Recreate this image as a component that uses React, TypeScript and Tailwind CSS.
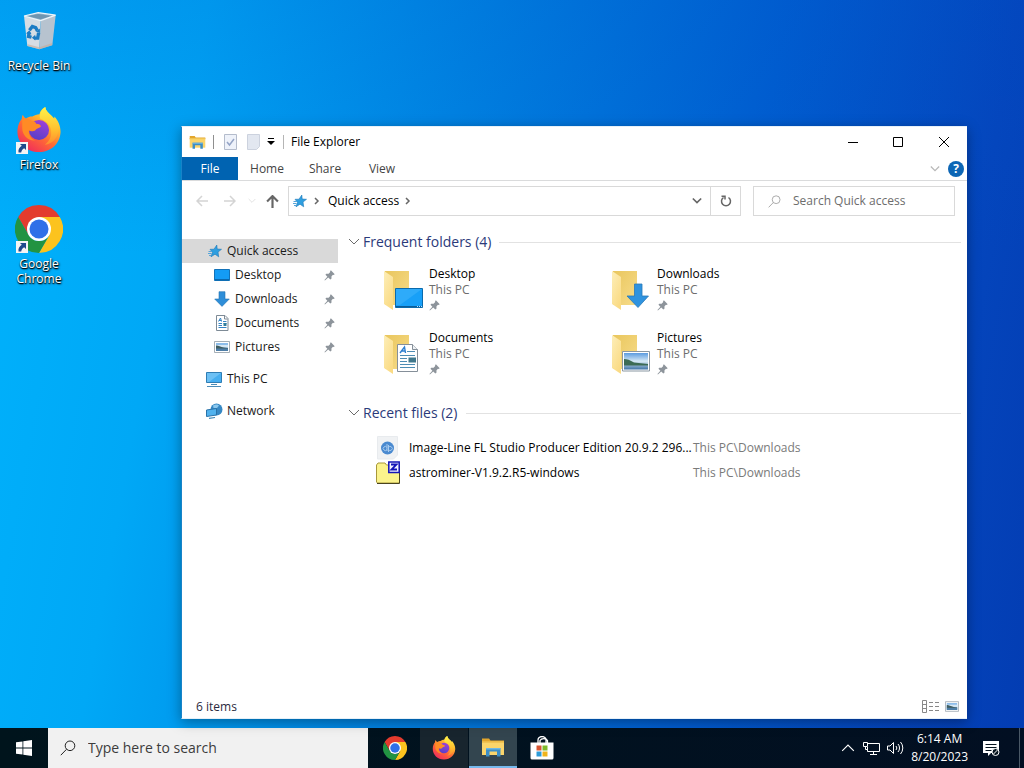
import type { ReactNode } from 'react';
import { clsx } from 'clsx';

type IconProps = { className?: string };

/* ---------- app icons ---------- */

function ChromeIcon({ className }: IconProps) {
  return (
    <svg viewBox="0 0 48 48" className={className} aria-hidden="true">
      <path fill="#e33b2e" d="M24 0A24 24 0 0 1 44.8 12H24L13.6 30 3.2 12A24 24 0 0 1 24 0Z" />
      <path fill="#fcc31e" d="M44.8 12A24 24 0 0 1 24 48L34.4 30 24 12Z" />
      <path fill="#229342" d="M3.2 12 13.6 30A12 12 0 0 0 34.4 30L24 48A24 24 0 0 1 3.2 12Z" />
      <circle cx="24" cy="24" r="12" fill="#fff" />
      <circle cx="24" cy="24" r="9.5" fill="#2f70e8" />
    </svg>
  );
}

function FirefoxIcon({ className }: IconProps) {
  return (
    <svg viewBox="0 0 48 48" className={className} aria-hidden="true">
      <defs>
        <linearGradient id="ffBody" x1="0.8" y1="0.05" x2="0.2" y2="0.95">
          <stop offset="0" stopColor="#fff044" />
          <stop offset="0.3" stopColor="#ffb52c" />
          <stop offset="0.6" stopColor="#ff6a35" />
          <stop offset="1" stopColor="#f02c5c" />
        </linearGradient>
        <linearGradient id="ffGlobe" x1="0.7" y1="0" x2="0.3" y2="1">
          <stop offset="0" stopColor="#a03fd8" />
          <stop offset="1" stopColor="#5540c8" />
        </linearGradient>
        <linearGradient id="ffTail" x1="0.5" y1="0" x2="0.5" y2="1">
          <stop offset="0" stopColor="#fff34a" />
          <stop offset="0.6" stopColor="#ffc02e" />
          <stop offset="1" stopColor="#ff8a30" />
        </linearGradient>
      </defs>
      <path
        fill="url(#ffBody)"
        d="M24 47C11 47 1.500 37.500 1.500 25.500 1.500 20 3.500 15 6 12.500 6 11 6.200 9.500 7 8 8 10 9 11.200 10.500 12 13 10.500 15 9.800 17 10 19 8.500 22 7.500 24.500 7.500 25 4.500 27 2 30.500 0 31 4 34 6.500 37 9 38.500 10.500 39 11.500 39.500 13 40 11.800 40.200 11 40 10 44 14 46.500 20 46.500 26 46 38 36.500 47 24 47Z"
      />
      <circle cx="24" cy="24" r="10.5" fill="url(#ffGlobe)" />
      <path
        fill="#ff8b25"
        d="M6.500 12.500C11 12 14.500 12.500 16.500 14.500 19 14.500 20.500 15.500 21 17.500 24 17.800 26 18.500 26 20.500 23.500 22 21 22.300 20 24.500 18 26 14.500 25 13.500 24.500 13 28 15 33 20 35 12 35.500 6.500 29 6.500 22Z"
      />
      <path
        fill="url(#ffTail)"
        d="M30.500 0C31 4 34 6.500 37 9 43 14 46 21 43.500 28 41 36 35 39 30 39.500 36 35 38 29 36 22 34.500 17 30 14 25.500 12.500 23.500 9 26 3 30.500 0Z"
      />
    </svg>
  );
}

function RecycleBinIcon({ className }: IconProps) {
  return (
    <svg viewBox="0 0 48 48" className={className} aria-hidden="true">
      <path fill="#8fb4cc" d="M6 6 23 2l21 3-18 7Z" />
      <path fill="#6f95b0" d="m10 6 13-2.500L39 6l-13 4Z" />
      <path fill="#d6dde4" d="M6 6l20 5.500L24.500 46 10 42Z" />
      <path fill="#b7c3cf" d="M26 11.500 44 5l-4 36-15.500 5Z" />
      <path stroke="#edf5fa" strokeWidth="1.500" fill="none" d="M6 6l20 5.500L44 5M6 6l17-4 21 3" />
      <path fill="#c5aa98" d="M10.500 40l14 3.500L40 38.500 39.700 41 24.500 46 10 42Z" opacity="0.6" />
      <g fill="none" stroke="#1c7cc4" strokeWidth="4">
        <path d="m12.500 23 3.500-4.500 4 1.500 2 3.500" />
        <path d="m23.500 26-1 6.500h-4" />
        <path d="m15 31.500-3.500-1 .5-5" />
      </g>
      <path fill="#1c7cc4" d="m25 21 .2 5.500-5-1.500ZM19.500 28.500v7l-4-3.500ZM8.500 27l4-4 2.500 5Z" />
    </svg>
  );
}

function ShortcutArrow({ className }: IconProps) {
  return (
    <svg viewBox="0 0 12 12" className={className} aria-hidden="true">
      <path fill="#f4f4f4" d="M0 0h12v12H0z" />
      <path fill="#1f4a8c" d="M4 2h6v6L8.200 6.200C6.500 7.200 5.500 8.500 5.200 10.500H2.500C2 7.500 3.500 5.200 5.800 3.800Z" />
    </svg>
  );
}

function ExplorerIcon({ className }: IconProps) {
  return (
    <svg viewBox="0 0 24 20" className={className} aria-hidden="true">
      <path fill="#e3a62c" d="M1 1.500h7l1.500 2H23V6H1z" />
      <path fill="#fbd56b" d="M1 4.500h22V18H1z" />
      <path fill="#e8b33e" d="M1 4.500h22V6H1z" opacity="0.5" />
      <path fill="#3c8ec6" d="M5 11h14.500v8.500H16v-5H8.500v5H5z" />
      <path fill="#6fb8e4" d="M5 11h14.500v1.500H5z" />
    </svg>
  );
}

function StoreIcon({ className }: IconProps) {
  return (
    <svg viewBox="0 0 24 24" className={className} aria-hidden="true">
      <path fill="none" stroke="#fff" strokeWidth="1.300" d="M8 7V4a4 3.500 0 0 1 8 0v3M10 7V4.500a4 3 0 0 1 7.500 0V7" />
      <path fill="#fff" d="M.5 6.500h23V22a1.500 1.500 0 0 1-1.500 1.500H2A1.500 1.500 0 0 1 .5 22z" />
      <path fill="#d65532" d="M6.500 9.500h5v5h-5z" />
      <path fill="#7fba2c" d="M12.500 9.500h5v5h-5z" />
      <path fill="#2c9bd8" d="M6.500 15.500h5v5h-5z" />
      <path fill="#f0b41c" d="M12.500 15.500h5v5h-5z" />
    </svg>
  );
}

function WindowsLogo({ className }: IconProps) {
  return (
    <svg viewBox="0 0 16 16" className={className} fill="#fff" aria-hidden="true">
      <path d="M0 2.300 6.500 1.400V7.600H0zM7.300 1.300 16 0V7.600H7.300zM0 8.400H6.500V14.600L0 13.700zM7.300 8.400H16V16L7.300 14.700z" />
    </svg>
  );
}

/* ---------- small glyphs ---------- */

function StarIcon({ className }: IconProps) {
  return (
    <svg viewBox="0 0 16 16" className={className} aria-hidden="true">
      <path
        fill="#2f9fe0"
        stroke="#1d78b8"
        strokeWidth="0.600"
        d="m9.800 2 .4 4 4.300.3-3.500 2.700.7 4.800-3.700-2.600L4 13.800l1.500-4.500L3 6.300l4-.1Z"
      />
      <path stroke="#56a5da" d="M1.500 8.500H5M1 10.500h3.500M2 12.500h2" />
    </svg>
  );
}

function PinIcon({ className }: IconProps) {
  return (
    <svg viewBox="0 0 12 12" className={className} aria-hidden="true">
      <path
        fill="#8d949b"
        d="M7.500.3 11.700 4.500 10.500 5.400 9.800 5.100 8.200 6.900 8.100 9.600 6.900 10.400 4.600 8.100 1 11.400.5 11 3.700 7.300 1.600 5.200 2.400 4 5 4 6.800 2.300 6.600 1.400Z"
      />
    </svg>
  );
}

function DesktopIcon({ className }: IconProps) {
  return (
    <svg viewBox="0 0 16 16" className={className} aria-hidden="true">
      <path fill="#149cf5" stroke="#1272b8" d="M.5 2.500h15v11H.5z" />
      <path fill="#0b6ab0" d="M1 12h14v1.500H1z" />
    </svg>
  );
}

function DownArrowIcon({ className }: IconProps) {
  return (
    <svg viewBox="0 0 16 16" className={className} aria-hidden="true">
      <path fill="#2e8ed8" stroke="#2474b4" strokeWidth="0.600" d="M5 .7h6V8h4.300L8 15.400.7 8H5z" />
    </svg>
  );
}

function DocumentIcon({ className }: IconProps) {
  return (
    <svg viewBox="0 0 16 16" className={className} aria-hidden="true">
      <path fill="#fff" stroke="#7e8b96" d="M2.500.5h8.500l3 3v12H2.500z" />
      <path fill="none" stroke="#7e8b96" d="M10.500.8v3.200h3.200" />
      <path fill="none" stroke="#3584c4" d="m4.500 6.500 2-3.500 1 3.500M5 5.500h2.500M9 6.500h3.500M4.500 8.500h3.500M9.500 8.500H12.500M4.500 10.500h3.500M4.500 12.500h8" />
      <path fill="#2e7d9a" d="M9.500 8h3v3h-3z" />
    </svg>
  );
}

function PictureIcon({ className }: IconProps) {
  return (
    <svg viewBox="0 0 16 12" className={className} aria-hidden="true">
      <path fill="#fff" stroke="#8e9aa4" strokeWidth="0.800" d="M.5.5h15v11H.5z" />
      <path fill="#8dbdea" d="M2 2h12v8H2z" />
      <path fill="#d5e7f4" d="M2 4h12v2.500H2z" />
      <path fill="#3f5d60" d="M2 4.500C4 4 6 6 10 6.500l4 .5v1H2z" />
      <path fill="#4d7da6" d="M2 7.500h12V10H2z" />
    </svg>
  );
}

function ThisPcIcon({ className }: IconProps) {
  return (
    <svg viewBox="0 0 18 16" className={className} aria-hidden="true">
      <path fill="#46aef0" stroke="#2f7db4" d="M1.500 1.500h15v10h-15z" />
      <path fill="#86cbf6" d="M2 2h14L4 11H2z" opacity="0.6" />
      <path stroke="#4b8cb8" d="M6 13.500h6M2 15.500h14" />
    </svg>
  );
}

function NetworkIcon({ className }: IconProps) {
  return (
    <svg viewBox="0 0 18 16" className={className} aria-hidden="true">
      <circle cx="11.500" cy="6.500" r="6" fill="#3688c4" />
      <path fill="#8cc8ee" d="M8 2.500c2-1.500 5-1.500 6 0L12 5 8.500 5Z" />
      <path fill="#51b2ee" stroke="#2a72a8" d="m1.500 7 10-1.500V12l-10 1.500z" />
      <path stroke="#3f86b6" strokeWidth="1.200" d="m4 15.300 6-.8" />
    </svg>
  );
}

function FolderIcon({ kind }: { kind: string }) {
  return (
    <svg viewBox="0 0 42 42" className="size-[42px] flex-none" aria-hidden="true">
      <defs>
        <linearGradient id="folderBack" x1="0" y1="0" x2="1" y2="1">
          <stop offset="0" stopColor="#e9c65d" />
          <stop offset="1" stopColor="#f7dc8a" />
        </linearGradient>
        <linearGradient id="folderFlap" x1="0" y1="0" x2="0.600" y2="1">
          <stop offset="0" stopColor="#fdeeb8" />
          <stop offset="1" stopColor="#fadb85" />
        </linearGradient>
        <linearGradient id="photoSky" x1="0" y1="0" x2="0" y2="1">
          <stop offset="0" stopColor="#5b9be0" />
          <stop offset="0.500" stopColor="#d6e9f6" />
          <stop offset="1" stopColor="#3f73a6" />
        </linearGradient>
      </defs>
      <path fill="url(#folderBack)" d="M2 1h24v34H2z" />
      <path fill="url(#folderFlap)" d="M1 1 10 7v33L1 34z" />
      {kind === 'Desktop' && (
        <>
          <path fill="#18a0f8" stroke="#0a6aac" d="M12.500 18.500h27v19h-27z" />
          <path fill="#43b5fb" d="M13 19h26L17 35h-4z" opacity="0.500" />
          <path stroke="#0a5c98" d="M13 36.500h26" />
          <path stroke="#b8e0ff" strokeDasharray="1 1" d="M34 36.500h5" />
        </>
      )}
      {kind === 'Downloads' && (
        <path fill="#2f93df" stroke="#2a78b8" strokeWidth="0.800" d="M23.500 14h7.500v12h6.500L27 37.500 16 26h7.500z" />
      )}
      {kind === 'Documents' && (
        <>
          <path fill="#fff" stroke="#858f99" d="M14.500 10.500h15l5 5v22h-20z" />
          <path fill="#eef1f4" stroke="#858f99" d="M29.500 10.500v5h5" />
          <path fill="none" stroke="#2e7fd0" strokeWidth="1.400" d="m17 19 4.500-6 1 6M18.500 17h4" />
          <path stroke="#4e8db4" d="M24 17.500h8M17 21.500h15M17 24.500h7M17 27.500h7M17 30.500h15M17 33.500h15" />
          <path fill="#41788c" d="M25.500 23.500H33v5h-7.500z" />
        </>
      )}
      {kind === 'Pictures' && (
        <>
          <path fill="#fff" stroke="#8a97a2" d="M11.500 17.500h27v19.500h-27z" />
          <path fill="url(#photoSky)" d="M13 19h24v16.500H13z" />
          <path fill="#3c6b55" d="M13 25c3 0 6 1 10 3.500l14 1.500v1.500H13z" />
        </>
      )}
    </svg>
  );
}

function Chevron({ className, d = 'm1 3 5 5 5-5' }: IconProps & { d?: string }) {
  return (
    <svg viewBox="0 0 12 12" className={clsx('fill-none stroke-current', className)} aria-hidden="true">
      <path d={d} />
    </svg>
  );
}

function SearchIcon({ className }: IconProps) {
  return (
    <svg viewBox="0 0 16 16" className={clsx('fill-none stroke-current', className)} aria-hidden="true">
      <circle cx="10" cy="5.800" r="4.800" />
      <path d="M6.500 9.300.8 15.200" />
    </svg>
  );
}

/* ---------- desktop ---------- */

function DesktopShortcut({ label, icon, shortcut }: { label: string; icon: ReactNode; shortcut?: boolean }) {
  return (
    <button className="relative flex h-[99px] w-[78px] flex-col items-center text-xs leading-[15px] text-white text-shadow-[1px_1px_2px_#000,0_1px_1px_#000]">
      <span className="mb-[3px] flex size-12 items-center justify-center">{icon}</span>
      {shortcut && <ShortcutArrow className="absolute top-9 left-4 size-3" />}
      <span className="w-16">{label}</span>
    </button>
  );
}

/* ---------- explorer window ---------- */

function TitleBar() {
  return (
    <header className="flex h-[30px] flex-none items-center">
      <ExplorerIcon className="ml-[7px] h-4 w-[17px]" />
      <span className="ml-[7px] h-3.5 w-px bg-[#8f8f8f]" />
      <button aria-label="Properties" className="ml-[10px]">
        <svg viewBox="0 0 13 16" className="h-4 w-[13px]">
          <path fill="#eef2fa" stroke="#b4bccc" d="M.5.5h12v15H.5z" />
          <path fill="none" stroke="#94a4c6" strokeWidth="1.500" d="m3 8 2.500 3L10 5" />
        </svg>
      </button>
      <button aria-label="New folder" className="ml-[10px]">
        <svg viewBox="0 0 13 16" className="h-4 w-[13px]">
          <path fill="#e2e7f0" stroke="#ccd2de" d="M.5.5h12v12l-3 3h-9z" />
        </svg>
      </button>
      <button aria-label="Customize Quick Access Toolbar" className="ml-[7px]">
        <svg viewBox="0 0 8 8" className="size-2">
          <path d="M1 0h6v1H1zM0 3h8L4 7z" />
        </svg>
      </button>
      <span className="ml-2 h-3.5 w-px bg-[#b5b5b5]" />
      <h1 className="ml-[7px] flex-1 text-black">File Explorer</h1>
      <div className="flex text-black">
        <button aria-label="Minimize" className="flex w-[45px] justify-center">
          <svg viewBox="0 0 10 10" className="size-2.5 stroke-current">
            <path d="M0 5.500h10" />
          </svg>
        </button>
        <button aria-label="Maximize" className="flex w-[45px] justify-center">
          <svg viewBox="0 0 10 10" className="size-2.5 fill-none stroke-current">
            <path d="M.5.5h9v9h-9z" />
          </svg>
        </button>
        <button aria-label="Close" className="flex w-[47px] justify-center">
          <svg viewBox="0 0 10 10" className="size-2.5 stroke-current">
            <path d="m0 0 10 10M10 0 0 10" />
          </svg>
        </button>
      </div>
    </header>
  );
}

function Ribbon() {
  return (
    <div className="flex h-6 flex-none items-stretch border-b border-[#dadbdc] text-[#444]">
      <button className="w-14 bg-[#0063b1] text-white">File</button>
      <button className="w-[58px]">Home</button>
      <button className="w-[58px]">Share</button>
      <button className="w-[56px]">View</button>
      <button aria-label="Expand the Ribbon" className="ml-auto text-[#b8b8b8]">
        <Chevron className="size-[10px] stroke-[1.5]" />
      </button>
      <button
        aria-label="Help"
        className="mr-[3px] ml-2 flex size-4 items-center justify-center self-center rounded-full bg-[#0d66b5] text-xs font-bold text-white"
      >
        ?
      </button>
    </div>
  );
}

function AddressBar() {
  return (
    <div className="flex flex-none items-center pt-[5px] pr-3">
      <div className="flex w-[106px] items-center text-[#d4d4d4]">
        <button aria-label="Back" className="ml-[14px]">
          <Chevron d="M12 6H1M6 1 1 6l5 5" className="size-3 stroke-[1.5]" />
        </button>
        <button aria-label="Forward" className="ml-4">
          <Chevron d="M0 6h11M6 1l5 5-5 5" className="size-3 stroke-[1.5]" />
        </button>
        <button aria-label="Recent locations" className="ml-3">
          <Chevron className="size-2" />
        </button>
        <button aria-label="Up" className="ml-[10px] text-[#666]">
          <Chevron d="M6 12V1M1 6l5-5 5 5" className="size-[13px] stroke-2" />
        </button>
      </div>
      <div className="flex h-[30px] flex-1 items-center border border-[#d9d9d9] text-black">
        <StarIcon className="ml-[3px] size-4" />
        <Chevron d="m4 3 3 3-3 3" className="ml-[3px] size-3 stroke-[1.5] text-[#666]" />
        <button className="ml-[5px]">Quick access</button>
        <Chevron d="m4 3 3 3-3 3" className="ml-[3px] size-3 stroke-[1.5] text-[#666]" />
        <button aria-label="Previous locations" className="mr-2 ml-auto text-[#666]">
          <Chevron className="size-[10px] stroke-2" />
        </button>
        <button aria-label="Refresh" className="flex h-full w-[30px] items-center justify-center border-l border-[#d9d9d9]">
          <svg viewBox="0 0 12 12" className="size-3 fill-none stroke-[#666] stroke-[1.5]">
            <path d="M8.500 2.500A4.500 4.500 0 1 1 3.500 2.500M1.500 1.200H5V4.500" />
          </svg>
        </button>
      </div>
      <label className="ml-3 flex h-[30px] w-[202px] items-center border border-[#d9d9d9] text-[#9a9a9a]">
        <SearchIcon className="ml-[14px] size-[13px]" />
        <input
          type="text"
          aria-label="Search Quick access"
          placeholder="Search Quick access"
          className="ml-3 min-w-0 flex-1 outline-none placeholder:text-[#6d6d6d]"
        />
      </label>
    </div>
  );
}

const PINNED = [
  { name: 'Desktop', Icon: DesktopIcon },
  { name: 'Downloads', Icon: DownArrowIcon },
  { name: 'Documents', Icon: DocumentIcon },
  { name: 'Pictures', Icon: PictureIcon },
];

function NavPane() {
  return (
    <nav className="w-[156px] flex-none pt-px text-[#1a1a1a]">
      <button className="flex h-6 w-full items-center bg-[#d9d9d9] pl-[25px]">
        <StarIcon className="mr-1 size-4" />
        Quick access
      </button>
      {PINNED.map(({ name, Icon }) => (
        <button key={name} className="flex h-6 w-full items-center pl-8">
          <Icon className="mr-[5px] size-4" />
          {name}
          <PinIcon className="mr-[3px] ml-auto size-[11px]" />
        </button>
      ))}
      <button className="mt-2 flex h-6 w-full items-center pl-[23px]">
        <ThisPcIcon className="mr-1 h-4 w-[18px]" />
        This PC
      </button>
      <button className="mt-2 flex h-6 w-full items-center pl-[23px]">
        <NetworkIcon className="mr-1 h-4 w-[18px]" />
        Network
      </button>
    </nav>
  );
}

function GroupHeader({ children }: { children: ReactNode }) {
  return (
    <div className="flex h-5 items-center">
      <Chevron className="size-3 text-[#6b6b6b]" />
      <h2 className="mr-2 ml-[3px] text-sm leading-5 text-[#2b3a7a]">{children}</h2>
      <span className="h-px flex-1 bg-[#e2e2e2]" />
    </div>
  );
}

const RECENT = [
  { name: 'Image-Line FL Studio Producer Edition 20.9.2 296...', path: 'This PC\\Downloads', zip: false },
  { name: 'astrominer-V1.9.2.R5-windows', path: 'This PC\\Downloads', zip: true },
];

function FileIcon({ zip }: { zip: boolean }) {
  return zip ? (
    <svg viewBox="0 0 24 24" className="size-6 flex-none" aria-hidden="true">
      <path fill="#fbf38c" stroke="#a8983a" d="M.5 21V4l1.500-2h7l1.500 2h13v17l-1 1H1.500z" />
      <path stroke="#4a4420" d="M1 22.500h22.500V8" fill="none" />
      <path fill="#f2f2ff" stroke="#1414b8" strokeWidth="1.500" d="M12.800 1h10.400v10.400H12.800z" />
      <path fill="none" stroke="#1414b8" strokeWidth="1.800" d="M15 3.500h5.500L15.500 8.500H21" />
    </svg>
  ) : (
    <svg viewBox="0 0 24 24" className="size-6 flex-none" aria-hidden="true">
      <path fill="#f0f2f4" stroke="#e8ebee" d="M1.500.5h20v18.500l-4 4h-16z" />
      <circle cx="11.500" cy="12" r="6.500" fill="#4a8ad0" />
      <path fill="none" stroke="#a8cbee" d="M11 8v7M12.500 9v7M11 11.500a2 2 0 1 0 0 2M12.500 11.500a2 2 0 1 1 0 2" />
    </svg>
  );
}

function FileList() {
  return (
    <main className="-mt-[6px] min-w-0 flex-1 pr-[6px] pl-[10px] text-black">
      <section className="h-[171px]">
        <GroupHeader>Frequent folders (4)</GroupHeader>
        <div className="mt-[18px] grid grid-cols-[228px_228px] pl-[35px]">
          {PINNED.map(({ name }) => (
            <button key={name} className="flex h-16 items-start gap-1 text-left">
              <FolderIcon kind={name} />
              <span className="flex flex-col leading-4">
                <span className="-mt-1">{name}</span>
                <span className="text-[#6d6d6d]">This PC</span>
                <PinIcon className="mt-0.5 size-[11px]" />
              </span>
            </button>
          ))}
        </div>
      </section>
      <section>
        <GroupHeader>Recent files (2)</GroupHeader>
        <table className="mt-3 ml-7 w-[calc(100%-28px)] table-fixed">
          <tbody>
            {RECENT.map((f) => (
              <tr key={f.name} className="h-[25px]">
                <td className="w-[315px] p-0">
                  <a href="#recent" className="flex items-center gap-[9px]">
                    <FileIcon zip={f.zip} />
                    <span className="whitespace-nowrap">{f.name}</span>
                  </a>
                </td>
                <td className="p-0 pl-0.5 text-[#7a7a7a]">{f.path}</td>
              </tr>
            ))}
          </tbody>
        </table>
      </section>
    </main>
  );
}

function StatusBar() {
  return (
    <footer className="flex h-[23px] flex-none items-center pr-2 pl-[14px] text-[#2a2a40]">
      6 items
      <button aria-label="Details view" className="ml-auto">
        <svg viewBox="0 0 17 13" className="h-[13px] w-[17px] fill-none stroke-[#888]">
          <path d="M.5.5h4v12h-4zM.5 4.500h4M.5 8.500h4" />
          <path strokeDasharray="4 2" d="M7 2.500h10M7 6.500h10M7 10.500h10" />
        </svg>
      </button>
      <button aria-label="Large icons view" className="ml-[6px]">
        <PictureIcon className="h-[11px] w-[14px]" />
      </button>
    </footer>
  );
}

function ExplorerWindow() {
  return (
    <div className="absolute top-[126px] right-[57px] bottom-[49px] left-[181px] flex flex-col border-y border-l border-y-[#e6f0f8] border-l-[#1883c8] bg-white shadow-[0_3px_12px_rgba(0,0,0,0.35)]">
      <TitleBar />
      <Ribbon />
      <AddressBar />
      <div className="flex min-h-0 flex-1 pt-[22px]">
        <NavPane />
        <FileList />
      </div>
      <StatusBar />
    </div>
  );
}

/* ---------- taskbar ---------- */

const APPS = [
  { name: 'Google Chrome', icon: <ChromeIcon className="size-6" />, style: '' },
  { name: 'Firefox', icon: <FirefoxIcon className="size-6" />, style: 'bg-[#18252e]' },
  { name: 'File Explorer', icon: <ExplorerIcon className="h-5 w-6" />, style: 'bg-[#33454f] border-b-2 border-[#76b9ed]' },
  { name: 'Microsoft Store', icon: <StoreIcon className="size-6" />, style: '' },
];

function Taskbar() {
  return (
    <div className="flex h-10 flex-none items-stretch bg-linear-to-r from-[#00141c] to-[#020f22] text-white">
      <button aria-label="Start" className="flex w-12 items-center justify-center">
        <WindowsLogo className="size-4" />
      </button>
      <label className="flex w-80 items-center bg-[#f1f1f1] text-[#222]">
        <SearchIcon className="ml-3 size-4" />
        <input
          type="text"
          aria-label="Type here to search"
          placeholder="Type here to search"
          className="ml-3 min-w-0 flex-1 text-sm outline-none placeholder:text-[#3c3c3c]"
        />
      </label>
      <div className="ml-[3px] flex gap-px">
        {APPS.map((app) => (
          <button key={app.name} aria-label={app.name} className={clsx('flex w-12 items-center justify-center', app.style)}>
            {app.icon}
          </button>
        ))}
      </div>
      <div className="ml-auto flex items-center">
        <button aria-label="Show hidden icons">
          <Chevron d="m1 8.500 5-5 5 5" className="size-[14px]" />
        </button>
        <button aria-label="Network" className="ml-2">
          <svg viewBox="0 0 17 15" className="h-[15px] w-[17px] fill-none stroke-white">
            <path d="M5 2.500h11.500v8H4.500V6M10.500 10.500v3M7 13.500h7M.5 1.500h4v4h-4zM2.500 5.500v3h2" />
          </svg>
        </button>
        <button aria-label="Volume" className="ml-[7px]">
          <svg viewBox="0 0 17 14" className="h-[14px] w-[17px] fill-none stroke-white">
            <path d="M.5 5h2.500l3.500-3.500v11L3 9H.5zM9 5a3 3 0 0 1 0 4M11 3a6 6 0 0 1 0 8M13.500 1a9 9 0 0 1 0 12" />
          </svg>
        </button>
        <button className="ml-[7px] text-center leading-[18px]">
          <span className="block">6:14 AM</span>
          <span className="block">8/20/2023</span>
        </button>
        <button aria-label="Notifications" className="ml-[14px]">
          <svg viewBox="0 0 18 17" className="h-[17px] w-[18px]">
            <path fill="#fff" d="M1 1h16v12H9l-3 3v-3H1z" />
            <path stroke="#06141f" d="M3.500 4.500h11M3.500 7.500h11M3.500 10.500h6" />
            <circle cx="13.500" cy="12" r="3.500" fill="#06141f" stroke="#fff" />
            <path stroke="#fff" d="m11.500 14 4-4" />
          </svg>
        </button>
        <button aria-label="Show desktop" className="mr-1 ml-[19px] h-10 w-px bg-[#4a5866]" />
      </div>
    </div>
  );
}

export default function App() {
  return (
    <div className="relative flex min-h-screen flex-col overflow-hidden bg-[linear-gradient(100deg,#00b2fc_0%,#00a8f6_18%,#0084e2_42%,#005ed0_68%,#0445bc_88%,#033cb2_100%)] font-['Open_Sans','Noto_Sans',sans-serif] text-xs">
      <div className="flex flex-1 flex-col items-start bg-[linear-gradient(to_bottom,rgba(0,80,200,0.2),transparent_35%)] pt-[7px]">
        <DesktopShortcut label="Recycle Bin" icon={<RecycleBinIcon className="h-11 w-10" />} />
        <DesktopShortcut label="Firefox" icon={<FirefoxIcon className="size-[46px]" />} shortcut />
        <DesktopShortcut label="Google Chrome" icon={<ChromeIcon className="size-12" />} shortcut />
      </div>
      <ExplorerWindow />
      <Taskbar />
    </div>
  );
}
